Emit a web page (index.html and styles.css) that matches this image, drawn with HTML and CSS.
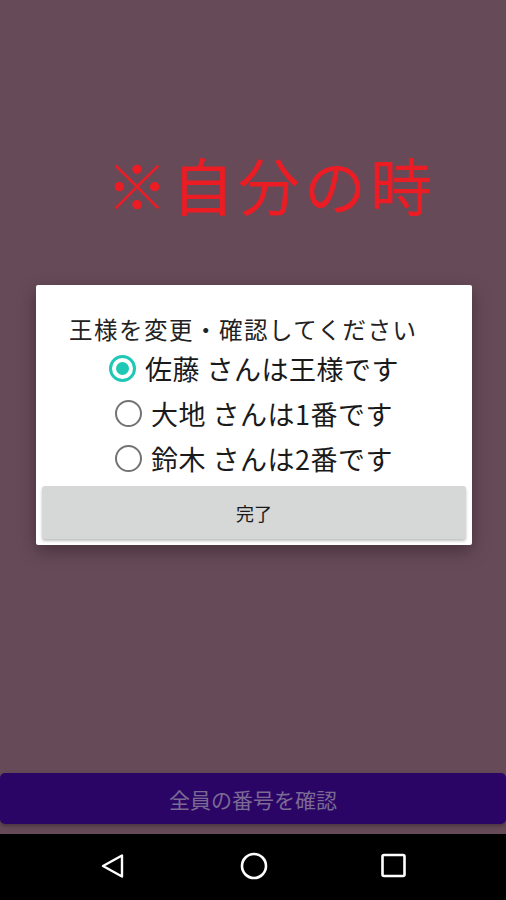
FILE: index.html
```html
<!DOCTYPE html>
<html lang="ja">

<head>
    <meta charset="UTF-8" />
    <meta name="viewport" content="width=device-width, initial-scale=1" />
    <title>王様ゲーム</title>
    <link rel="stylesheet" href="styles.css">
</head>

<body>
    <div class="screen">
        <main class="content">
            <h1 class="note">※自分の時</h1>

            <div class="dialog" role="dialog" aria-labelledby="dialog-title">
                <p id="dialog-title" class="dialog-title">王様を変更・確認してください</p>
                <ul class="choices">
                    <li class="choice"><span class="radio checked"></span>佐藤 さんは王様です</li>
                    <li class="choice"><span class="radio"></span>大地 さんは1番です</li>
                    <li class="choice"><span class="radio"></span>鈴木 さんは2番です</li>
                </ul>
                <button class="done">完了</button>
            </div>

            <button class="check-all">全員の番号を確認</button>
        </main>

        <nav class="navbar">
            <svg class="nav-icon" viewBox="0 0 28 28" aria-label="戻る">
                <path d="M4 14 L23 3.5 L23 24.5 Z" fill="none" stroke="#fff" stroke-width="2.4" stroke-linejoin="round" />
            </svg>
            <svg class="nav-icon" viewBox="0 0 28 28" aria-label="ホーム">
                <circle cx="14" cy="14" r="12" fill="none" stroke="#fff" stroke-width="2.6" />
            </svg>
            <svg class="nav-icon" viewBox="0 0 28 28" aria-label="履歴">
                <rect x="2.5" y="3" width="22" height="21" rx="1.5" fill="none" stroke="#fff" stroke-width="2.6" />
            </svg>
        </nav>
    </div>
</body>

</html>
```

FILE: styles.css
```css
* {
    box-sizing: border-box;
}

body {
    margin: 0;
    font-family: "Noto Sans CJK JP", "Noto Sans", sans-serif;
    background: #000;
}

.screen {
    width: 506px;
    height: 900px;
    display: flex;
    flex-direction: column;
}

.content {
    flex: 1;
    display: flex;
    flex-direction: column;
    background: #674a58;
}

/* 赤い注記 */
.note {
    margin: 152px 0 0 106px;
    font-size: 62px;
    line-height: 65px;
    font-weight: normal;
    color: #ec1c24;
    letter-spacing: 4px;
}

/* ─── ダイアログ ───────────────────────────── */
.dialog {
    margin: 68px 34px 0 36px;
    width: 436px;
    padding: 29px 6px 6px;
    background: #fff;
    border-radius: 2px;
    box-shadow: 0 6px 18px rgba(0, 0, 0, 0.35);
}

.dialog-title {
    margin: 0 0 2px 27px;
    font-size: 23.5px;
    line-height: 30px;
    letter-spacing: 1.5px;
    color: #222;
}

.choices {
    list-style: none;
    margin: 0;
    padding: 0;
}

.choice {
    display: flex;
    align-items: center;
    justify-content: center;
    gap: 9px;
    height: 45px;
    font-size: 27px;
    letter-spacing: 0.5px;
    color: #1a1a1a;
}

.radio {
    width: 27px;
    height: 27px;
    border: 2.5px solid #737373;
    border-radius: 50%;
    display: flex;
    align-items: center;
    justify-content: center;
}

.radio.checked {
    border: 3px solid #1ec8b4;
}

.radio.checked::after {
    content: "";
    width: 13px;
    height: 13px;
    border-radius: 50%;
    background: #1ec8b4;
}

.done {
    display: block;
    width: 100%;
    height: 53px;
    margin-top: 5px;
    border: none;
    border-radius: 3px;
    background: #d6d7d7;
    box-shadow: 0 2px 3px rgba(0, 0, 0, 0.25);
    font-family: inherit;
    font-size: 18px;
    color: #1a1a1a;
}

/* ─── 下部ボタン ───────────────────────────── */
.check-all {
    margin: auto 0 10px;
    width: 506px;
    height: 51px;
    border: none;
    border-radius: 5px;
    background: #2a0566;
    box-shadow: 0 2px 4px rgba(0, 0, 0, 0.3);
    font-family: inherit;
    font-size: 21px;
    color: #7b6a93;
}

/* ─── ナビゲーションバー ───────────────────── */
.navbar {
    height: 66px;
    display: flex;
    align-items: center;
    justify-content: space-between;
    padding: 0 98px 2px 99px;
    background: #000;
}

.nav-icon {
    width: 28px;
    height: 28px;
}
```
